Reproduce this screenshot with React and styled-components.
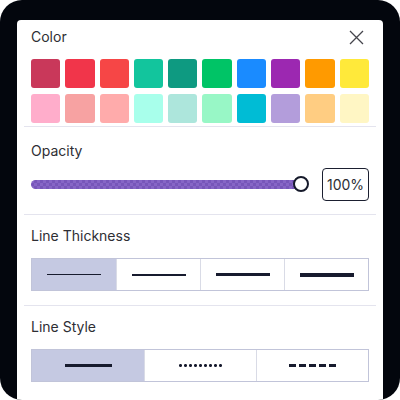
import React from "react";
import styled, { createGlobalStyle } from "styled-components";

const Global = createGlobalStyle`
  body {
    margin: 0;
    background: #ffffff;
    font-family: Inter, "Noto Sans", sans-serif;
  }
`;

const Frame = styled.div`
  width: 400px;
  height: 400px;
  box-sizing: border-box;
  background: #03060d;
  border-radius: 22px;
  padding: 20px 17px 0;
  overflow: hidden;
`;

const Panel = styled.div`
  background: #fff;
  border-radius: 4px 4px 0 0;
  height: 420px;
`;

const Section = styled.div`
  margin: 0 7px;
  padding: ${(p) => p.pad || "11px 7px 14px"};
  border-bottom: ${(p) => (p.last ? "none" : "1.5px solid #e4e4ee")};
`;

const Header = styled.div`
  display: flex;
  align-items: center;
  justify-content: space-between;
  height: 20px;
  margin-bottom: ${(p) => p.gap || 12}px;
`;

const Label = styled.span`
  font-size: 14px;
  line-height: 20px;
  color: #2e2e34;
`;

const Close = styled.button`
  border: none;
  background: none;
  padding: 0;
  margin-right: 5px;
  display: flex;
  cursor: pointer;
`;

const Swatches = styled.div`
  display: grid;
  grid-template-columns: repeat(10, 1fr);
  column-gap: 5px;
  row-gap: 6px;
`;

const Swatch = styled.div`
  height: 29px;
  border-radius: 3px;
  background: ${(p) => p.color};
`;

const SliderRow = styled.div`
  display: flex;
  align-items: center;
  gap: 10px;
`;

const Track = styled.div`
  position: relative;
  flex: 1;
  height: 9px;
  border-radius: 5px;
  margin-right: 11px;
  background:
    linear-gradient(rgba(108, 68, 186, 0.82), rgba(108, 68, 186, 0.82)),
    repeating-conic-gradient(#a9a9b8 0% 25%, #ffffff 0% 50%) 0 0 / 6px 6px;
`;

const Thumb = styled.div`
  position: absolute;
  right: -8px;
  top: 50%;
  width: 12px;
  height: 12px;
  margin-top: -8.5px;
  border-radius: 50%;
  background: #fff;
  border: 2.5px solid #161a2b;
`;

const ValueBox = styled.div`
  width: 47px;
  height: 33px;
  box-sizing: border-box;
  border: 1.5px solid #1b1f30;
  border-radius: 4px;
  display: flex;
  align-items: center;
  justify-content: center;
  font-size: 14px;
  color: #2e2e34;
`;

const Segmented = styled.div`
  display: grid;
  grid-template-columns: repeat(${(p) => p.count}, 1fr);
  height: 33px;
  box-sizing: border-box;
  border: 1.5px solid #c1c4d9;
`;

const Segment = styled.div`
  display: flex;
  align-items: center;
  justify-content: center;
  background: ${(p) => (p.active ? "#c5c9e2" : "#fff")};
  & + & {
    border-left: 1.5px solid #d9dbe6;
  }
`;

const Line = styled.div`
  width: ${(p) => p.w || 54}px;
  height: 0;
  border-top: ${(p) => p.t}px solid #171b2e;
`;

const Dashes = styled.div`
  width: 47px;
  height: 3px;
  background: repeating-linear-gradient(90deg, #171b2e 0 7px, transparent 7px 10px);
`;

const Dots = styled.div`
  width: 45px;
  height: 3px;
  background: radial-gradient(circle, #171b2e 1.3px, transparent 1.6px) 0 0 / 5px 3px repeat-x;
`;

const row1 = ["#c9385a", "#f1354a", "#f64646", "#12c59d", "#0e9a81", "#00c466", "#1a8bff", "#9c28b1", "#ff9a00", "#ffe93a"];
const row2 = ["#ffadcb", "#f7a2a2", "#ffabab", "#a8ffeb", "#ade6dc", "#98f7c6", "#00bcd5", "#b39ddb", "#ffcd82", "#fff6c4"];

export default function App() {
  return (
    <>
      <Global />
      <Frame>
        <Panel>
          <Section pad="7px 7px 3px">
            <Header>
              <Label>Color</Label>
              <Close aria-label="close">
                <svg width="15" height="15" viewBox="0 0 15 15">
                  <path d="M1 1 L14 14 M14 1 L1 14" stroke="#45454c" strokeWidth="1.3" />
                </svg>
              </Close>
            </Header>
            <Swatches>
              {[...row1, ...row2].map((c, i) => (
                <Swatch key={i} color={c} />
              ))}
            </Swatches>
          </Section>
          <Section pad="14px 7px 13px">
            <Header gap={7}>
              <Label>Opacity</Label>
            </Header>
            <SliderRow>
              <Track>
                <Thumb />
              </Track>
              <ValueBox>100%</ValueBox>
            </SliderRow>
          </Section>
          <Section pad="11px 7px 14px">
            <Header>
              <Label>Line Thickness</Label>
            </Header>
            <Segmented count={4}>
              <Segment active><Line t={1.2} /></Segment>
              <Segment><Line t={2} /></Segment>
              <Segment><Line t={3} /></Segment>
              <Segment><Line t={4} /></Segment>
            </Segmented>
          </Section>
          <Section last>
            <Header>
              <Label>Line Style</Label>
            </Header>
            <Segmented count={3}>
              <Segment active><Line t={3} w={47} /></Segment>
              <Segment><Dots /></Segment>
              <Segment><Dashes /></Segment>
            </Segmented>
          </Section>
        </Panel>
      </Frame>
    </>
  );
}
